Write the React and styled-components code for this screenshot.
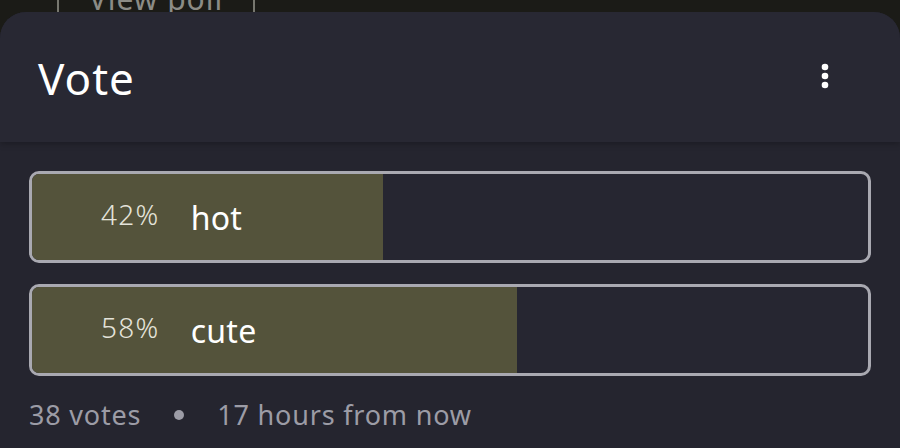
import React from "react";
import styled, { createGlobalStyle } from "styled-components";

const GlobalStyle = createGlobalStyle`
  html, body {
    margin: 0;
    padding: 0;
    background: #1b1b17;
    font-family: "Noto Sans", "Open Sans", sans-serif;
  }
`;

const options = [
  { id: 1, label: "hot", percent: 42 },
  { id: 2, label: "cute", percent: 58 },
];

const App = () => (
  <>
    <GlobalStyle />
    <Page>
      <BehindStrip>
        <ViewPollButton>View poll</ViewPollButton>
      </BehindStrip>
      <Sheet>
        <SheetHeader>
          <Title>Vote</Title>
          <MoreButton aria-label="More">
            <svg width="10" height="26" viewBox="0 0 10 26">
              <circle cx="5" cy="4" r="3.3" fill="#fff" />
              <circle cx="5" cy="13" r="3.3" fill="#fff" />
              <circle cx="5" cy="22" r="3.3" fill="#fff" />
            </svg>
          </MoreButton>
        </SheetHeader>
        <SheetBody>
          <OptionList>
            {options.map((opt) => (
              <OptionBar key={opt.id}>
                <Fill style={{ width: `${opt.percent}%` }} />
                <OptionContent>
                  <Percent>{opt.percent}%</Percent>
                  <OptionLabel>{opt.label}</OptionLabel>
                </OptionContent>
              </OptionBar>
            ))}
          </OptionList>
          <Meta>
            <span>38 votes</span>
            <Dot />
            <span>17 hours from now</span>
          </Meta>
        </SheetBody>
      </Sheet>
    </Page>
  </>
);

export default App;

const Page = styled.div`
  width: 900px;
  height: 448px;
  overflow: hidden;
  display: flex;
  flex-direction: column;
  background: #1b1b17;
`;

const BehindStrip = styled.div`
  height: 12px;
  flex: none;
  overflow: hidden;
  padding-left: 57px;
`;

const ViewPollButton = styled.div`
  width: 198px;
  height: 60px;
  margin-top: -40px;
  border: 2px solid #77776f;
  box-sizing: border-box;
  color: #8c8c86;
  font-size: 30px;
  letter-spacing: 1px;
  display: flex;
  align-items: flex-end;
  justify-content: center;
  padding-bottom: 4px;
  line-height: 1;
`;

const Sheet = styled.div`
  flex: 1;
  background: #262631;
  border-radius: 26px 26px 0 0;
  display: flex;
  flex-direction: column;
  overflow: hidden;
`;

const SheetHeader = styled.div`
  height: 130px;
  flex: none;
  display: flex;
  align-items: center;
  justify-content: space-between;
  padding: 0 70px 0 38px;
  background: #282833;
  box-shadow: 0 2px 6px rgba(0, 0, 0, 0.25);
  position: relative;
  z-index: 1;
`;

const Title = styled.h1`
  margin: 0;
  font-size: 44px;
  font-weight: 400;
  letter-spacing: 1px;
  color: #ffffff;
  line-height: 1;
  margin-top: 2px;
`;

const MoreButton = styled.div`
  display: flex;
  align-items: center;
  justify-content: center;
  margin-top: -2px;
`;

const SheetBody = styled.div`
  flex: 1;
  padding: 29px 29px 0 29px;
  background: #25252f;
`;

const OptionList = styled.div`
  display: flex;
  flex-direction: column;
  gap: 21px;
`;

const OptionBar = styled.div`
  position: relative;
  height: 92px;
  box-sizing: border-box;
  border: 3px solid #a9a9b1;
  border-radius: 10px;
  overflow: hidden;
  background: #262631;
`;

const Fill = styled.div`
  position: absolute;
  left: 0;
  top: 0;
  bottom: 0;
  background: #54533b;
`;

const OptionContent = styled.div`
  position: relative;
  height: 100%;
  display: flex;
  align-items: center;
  padding-left: 69px;
  gap: 31px;
`;

const Percent = styled.span`
  font-size: 28px;
  font-weight: 300;
  letter-spacing: 1.3px;
  color: #e4e3da;
  margin-top: -6px;
`;

const OptionLabel = styled.span`
  font-size: 32px;
  letter-spacing: 0.3px;
  color: #ffffff;
`;

const Meta = styled.div`
  display: flex;
  align-items: center;
  height: 76px;
  font-size: 27px;
  letter-spacing: 0.8px;
  color: #9c9ca6;
`;

const Dot = styled.span`
  width: 10px;
  height: 10px;
  border-radius: 50%;
  background: #9c9ca6;
  margin: 2px 33px 0 33px;
`;
